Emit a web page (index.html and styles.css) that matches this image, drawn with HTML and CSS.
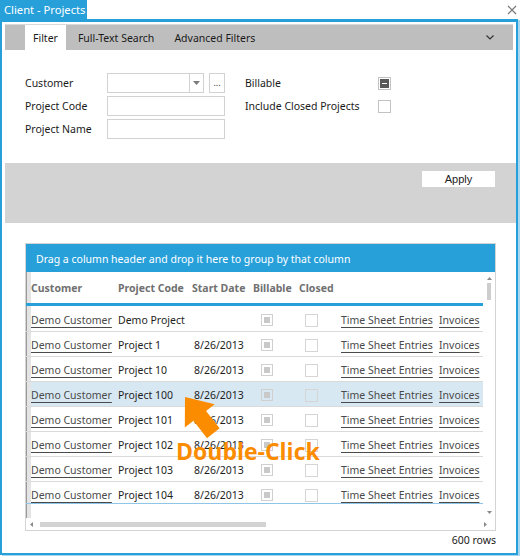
FILE: index.html
```html
<!DOCTYPE html>
<html>
<head>
<meta charset="utf-8">
<link rel="stylesheet" href="styles.css">
</head>
<body>
<div class="app">
  <div class="titlebar">
    <div class="title">Client - Projects</div>
    <div class="close"><svg width="10" height="10" viewBox="0 0 10 10"><path d="M1 1L9 9M9 1L1 9" stroke="#777" stroke-width="1.2" fill="none"/></svg></div>
  </div>
  <div class="window">
    <div class="tabs">
      <div class="tab active">Filter</div>
      <div class="tab">Full-Text Search</div>
      <div class="tab">Advanced Filters</div>
      <div class="chev"><svg width="8" height="5" viewBox="0 0 8 5"><path d="M0.5 0.5L4 4L7.5 0.5" stroke="#333" stroke-width="1.2" fill="none"/></svg></div>
    </div>
    <div class="filter">
      <div class="form">
        <div class="lbl">Customer</div>
        <div class="combo">
          <div class="combo-box"><div class="combo-text"></div><div class="combo-arrow"><svg width="7" height="4" viewBox="0 0 7 4"><path d="M0 0H7L3.5 4Z" fill="#7a7a7a"/></svg></div></div>
          <div class="dots">...</div>
        </div>
        <div class="lbl rl">Billable</div>
        <div class="chk"><div class="ind"></div></div>

        <div class="lbl">Project Code</div>
        <div class="input"></div>
        <div class="lbl rl">Include Closed Projects</div>
        <div class="chk"></div>

        <div class="lbl">Project Name</div>
        <div class="input"></div>
      </div>
    </div>
    <div class="actions"><button class="apply">Apply</button></div>
    <div class="grid">
      <div class="group">Drag a column header and drop it here to group by that column</div>
      <div class="gbody">
        <div class="table">
          <div class="hdr">
            <div></div><div>Customer</div><div>Project Code</div><div>Start Date</div><div>Billable</div><div>Closed</div><div></div><div></div>
          </div>
          <div class="hline"></div>
          <div class="rows">
            <div class="row"><div></div><div><span class="lnk">Demo Customer</span></div><div>Demo Project</div><div class="date"></div><div><span class="dcb"></span></div><div><span class="ecb"></span></div><div><span class="lnk">Time Sheet Entries</span></div><div><span class="lnk">Invoices</span></div></div>
            <div class="row"><div></div><div><span class="lnk">Demo Customer</span></div><div>Project 1</div><div class="date">8/26/2013</div><div><span class="dcb"></span></div><div><span class="ecb"></span></div><div><span class="lnk">Time Sheet Entries</span></div><div><span class="lnk">Invoices</span></div></div>
            <div class="row"><div></div><div><span class="lnk">Demo Customer</span></div><div>Project 10</div><div class="date">8/26/2013</div><div><span class="dcb"></span></div><div><span class="ecb"></span></div><div><span class="lnk">Time Sheet Entries</span></div><div><span class="lnk">Invoices</span></div></div>
            <div class="row sel"><div></div><div><span class="lnk">Demo Customer</span></div><div>Project 100</div><div class="date">8/26/2013</div><div><span class="dcb"></span></div><div><span class="ecb"></span></div><div><span class="lnk">Time Sheet Entries</span></div><div><span class="lnk">Invoices</span></div></div>
            <div class="row"><div></div><div><span class="lnk">Demo Customer</span></div><div>Project 101</div><div class="date">8/26/2013</div><div><span class="dcb"></span></div><div><span class="ecb"></span></div><div><span class="lnk">Time Sheet Entries</span></div><div><span class="lnk">Invoices</span></div></div>
            <div class="row"><div></div><div><span class="lnk">Demo Customer</span></div><div>Project 102</div><div class="date">8/26/2013</div><div><span class="dcb"></span></div><div><span class="ecb"></span></div><div><span class="lnk">Time Sheet Entries</span></div><div><span class="lnk">Invoices</span></div></div>
            <div class="row"><div></div><div><span class="lnk">Demo Customer</span></div><div>Project 103</div><div class="date">8/26/2013</div><div><span class="dcb"></span></div><div><span class="ecb"></span></div><div><span class="lnk">Time Sheet Entries</span></div><div><span class="lnk">Invoices</span></div></div>
            <div class="row"><div></div><div><span class="lnk">Demo Customer</span></div><div>Project 104</div><div class="date">8/26/2013</div><div><span class="dcb"></span></div><div><span class="ecb"></span></div><div><span class="lnk">Time Sheet Entries</span></div><div><span class="lnk">Invoices</span></div></div>
          </div>
          <div class="bline"></div>
        </div>
        <div class="vscroll">
          <svg class="up" width="5" height="3" viewBox="0 0 5 3"><path d="M0 3H5L2.5 0Z" fill="#8a8a8a"/></svg>
          <div class="vthumb"></div>
          <div class="spacer"></div>
          <svg class="down" width="5" height="3" viewBox="0 0 5 3"><path d="M0 0H5L2.5 3Z" fill="#8a8a8a"/></svg>
        </div>
      </div>
      <div class="hscroll">
        <svg width="3" height="5" viewBox="0 0 3 5"><path d="M3 0V5L0 2.5Z" fill="#8a8a8a"/></svg>
        <div class="hthumb"></div>
        <div class="spacer"></div>
        <svg width="3" height="5" viewBox="0 0 3 5"><path d="M0 0V5L3 2.5Z" fill="#8a8a8a"/></svg>
      </div>
    </div>
    <div class="footer">600 rows</div>
  </div>
  <svg class="arrow" width="521" height="557" viewBox="0 0 521 557">
    <g transform="translate(185 397) rotate(52)">
      <polygon points="0,0 24,-19 24,-8 46,-8 46,8 24,8 24,19" fill="#fb8c00"/>
    </g>
  </svg>
  <div class="callout">Double-Click</div>
</div>
</body>
</html>
```
FILE: styles.css
```css
* { box-sizing: border-box; }
body { margin: 0; font-family: "Noto Sans", sans-serif; font-size: 10.5px; color: #1e1e1e; }
.app { position: relative; width: 521px; height: 557px; background: #fff; overflow: hidden; }

.titlebar { display: flex; height: 19px; }
.title { background: #27a0da; color: #fff; width: 87px; padding-left: 4px; line-height: 19px; font-size: 11.2px; white-space: nowrap; }
.close { margin-left: auto; margin-right: 4px; display: flex; align-items: center; }

.window { width: 518px; height: 536px; border: 2px solid #27a0da; border-top-width: 3px; box-shadow: 2px 1px 0 #a9d7ef; display: flex; flex-direction: column; }

.tabs { margin: 2px 3px 0; height: 26px; background: #bfbebe; display: flex; padding-left: 20px; border-top: 1px solid #d9d9d9; }
.tab { padding: 1px 8px 0; margin-right: 4px; display: flex; align-items: center; color: #1a1a1a; }
.tab.active { background: #fff; }
.chev { margin-left: auto; margin-right: 19px; display: flex; align-items: center; }

.filter { height: 113px; padding: 23px 0 0 23px; }
.form { display: grid; grid-template-columns: 82px 118px 153px 13px; grid-auto-rows: 20px; row-gap: 3px; align-items: center; }
.lbl { color: #1a1a1a; }
.rl { padding-left: 20px; }
.input { height: 20px; border: 1px solid #d2d2d2; }
.combo { display: flex; gap: 5px; height: 20px; }
.combo-box { flex: 1; display: flex; border: 1px solid #d2d2d2; }
.combo-text { flex: 1; }
.combo-arrow { width: 14px; border-left: 1px solid #d2d2d2; display: flex; align-items: center; justify-content: center; }
.dots { width: 16px; border: 1px solid #d2d2d2; font-size: 9px; text-align: center; line-height: 18px; color: #333; }
.chk { width: 13px; height: 13px; border: 1px solid #c2c2c2; display: flex; align-items: center; justify-content: center; }
.ind { width: 9px; height: 9px; background: #585858; position: relative; }
.ind::after { content: ""; position: absolute; left: 2px; right: 2px; top: 4px; height: 1px; background: #fff; }

.actions { margin-left: 3px; height: 60px; background: #d3d3d3; display: flex; justify-content: flex-end; align-items: flex-start; padding: 8px 21px 0 0; }
.apply { width: 73px; height: 16px; background: #fff; border: none; padding: 0; font: inherit; font-family: "Liberation Sans", sans-serif; font-size: 11px; line-height: 16px; color: #222; }

.grid { margin: 20px 20px 0 23px; height: 288px; border: 1px solid #d4d4d4; display: flex; flex-direction: column; }
.group { height: 28px; background: #27a0da; color: #fff; padding: 1px 0 0 10px; display: flex; align-items: center; }
.gbody { display: flex; height: 246px; }
.table { width: 457px; display: flex; flex-direction: column; background: linear-gradient(to right, #9a9a9a 0 1px, #e4e4e4 1px 5px, transparent 5px); }
.hdr, .row { display: grid; grid-template-columns: 5px 87px 74px 61px 46px 42px 98px 44px; align-items: center; }
.hdr { height: 31px; font-weight: 700; color: #707070; }
.hline { height: 3px; background: #27a0da; margin-bottom: 1px; }
.rows { height: 196px; overflow: hidden; }
.row { height: 25px; border-bottom: 1px solid #dadada; white-space: nowrap; padding-top: 2px; }
.row.sel { background: linear-gradient(to right, transparent 5px, #d8e8f3 5px); }
.lnk { color: #4a4a4a; text-decoration: underline; text-decoration-color: #4a4a4a; text-underline-offset: 3px; }
.date { padding-left: 2px; }
.dcb { display: flex; align-items: center; justify-content: center; width: 12px; height: 12px; border: 1px solid #d0d0d0; margin-left: 8px; }
.dcb::after { content: ""; width: 6px; height: 6px; background: #c9c9c9; }
.ecb { display: block; width: 13px; height: 13px; border: 1px solid #d5d5d5; margin-left: 6px; }
.bline { height: 1px; background: #8fc6e8; }

.vscroll { width: 12px; display: flex; flex-direction: column; align-items: center; padding: 5px 0 4px; }
.vthumb { width: 4px; height: 17px; background: #cdcdcd; margin-top: 3px; }
.spacer { flex: 1; }

.hscroll { height: 12px; display: flex; align-items: center; padding: 0 8px 0 4px; }
.hthumb { width: 226px; height: 5px; background: #d3d3d3; margin-left: 7px; }

.footer { height: 18px; line-height: 18px; text-align: right; padding-right: 20px; color: #1a1a1a; }

.arrow { position: absolute; left: 0; top: 0; pointer-events: none; }
.callout { position: absolute; left: 176px; top: 440px; font-family: "Open Sans", sans-serif; font-weight: 700; font-size: 23px; line-height: 23px; color: #fb8c00; white-space: nowrap; }
```
